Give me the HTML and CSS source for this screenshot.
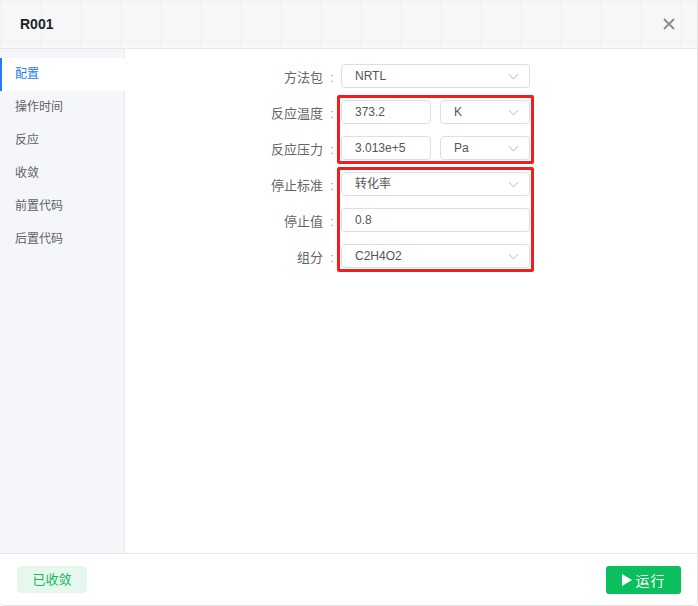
FILE: index.html
```html
<!doctype html>
<html lang="zh">
  <head>
    <meta charset="UTF-8" />
    <meta name="viewport" content="width=device-width, initial-scale=1.0" />
    <title>R001</title>
    <link rel="stylesheet" href="styles.css">
  </head>
  <body>
    <div class="dialog">
      <div class="dialog-header">
        <span class="dialog-title">R001</span>
        <svg class="close" width="12" height="12" viewBox="0 0 12 12">
          <path d="M1 1L11 11M11 1L1 11" stroke="#8a8a8a" stroke-width="1.8" fill="none" />
        </svg>
      </div>

      <div class="dialog-body">
        <ul class="side-menu">
          <li class="active">配置</li>
          <li>操作时间</li>
          <li>反应</li>
          <li>收敛</li>
          <li>前置代码</li>
          <li>后置代码</li>
        </ul>

        <div class="form">
          <div class="row">
            <label>方法包</label>
            <div class="select wide">NRTL<i class="arrow"></i></div>
          </div>

          <div class="group">
            <div class="row">
              <label>反应温度</label>
              <div class="input half">373.2</div>
              <div class="select half unit">K<i class="arrow"></i></div>
            </div>
            <div class="row">
              <label>反应压力</label>
              <div class="input half">3.013e+5</div>
              <div class="select half unit">Pa<i class="arrow"></i></div>
            </div>
          </div>

          <div class="group">
            <div class="row">
              <label>停止标准</label>
              <div class="select wide">转化率<i class="arrow"></i></div>
            </div>
            <div class="row">
              <label>停止值</label>
              <div class="input wide">0.8</div>
            </div>
            <div class="row">
              <label>组分</label>
              <div class="select wide">C2H4O2<i class="arrow"></i></div>
            </div>
          </div>
        </div>
      </div>

      <div class="dialog-footer">
        <span class="status">已收敛</span>
        <button class="run">
          <svg width="10" height="12" viewBox="0 0 10 12"><path d="M0 0L10 6L0 12Z" fill="#fff" /></svg>
          运行
        </button>
      </div>
    </div>
  </body>
</html>
```

FILE: styles.css
```css
*,
*::before,
*::after {
  box-sizing: border-box;
}

body {
  margin: 0;
  font-family: "Liberation Sans", "Noto Sans CJK SC", sans-serif;
  color: #606266;
  background: #fff;
}

.dialog {
  width: 698px;
  height: 606px;
  border: 1px solid #e3e3e3;
  border-top: none;
  border-left: none;
  border-radius: 0 0 5px 5px;
  display: flex;
  flex-direction: column;
  overflow: hidden;
}

.dialog-header {
  height: 49px;
  flex: none;
  display: flex;
  align-items: center;
  justify-content: space-between;
  padding: 0 22px 0 20px;
  border-bottom: 1px solid #e6e8eb;
  background-color: #f6f7f9;
  background-image:
    linear-gradient(rgba(228, 231, 236, 0.25) 1px, transparent 1px),
    linear-gradient(90deg, rgba(228, 231, 236, 0.25) 1px, transparent 1px);
  background-size: 40px 40px;
}

.dialog-title {
  font-size: 14px;
  font-weight: bold;
  color: #1f1f1f;
}

.dialog-body {
  flex: 1;
  display: flex;
  min-height: 0;
}

.side-menu {
  list-style: none;
  margin: 0;
  padding: 9px 0 0;
  width: 125px;
  flex: none;
  background: #f5f6fa;
  border-right: 1px solid #e8e9ed;
}

.side-menu li {
  height: 33px;
  line-height: 33px;
  padding-left: 15px;
  font-size: 12px;
  color: #606266;
}

.side-menu li.active {
  background: #fff;
  color: #2a7cf6;
  border-left: 2px solid #2a7cf6;
  padding-left: 13px;
  margin-right: -1px;
}

.form {
  padding: 15px 0 0 112px;
  display: flex;
  flex-direction: column;
  gap: 12px;
}

.group {
  position: relative;
  display: flex;
  flex-direction: column;
  gap: 12px;
}

/* red annotation frame over the controls */
.group::after {
  content: "";
  position: absolute;
  left: 100px;
  top: -5px;
  bottom: -4px;
  width: 197px;
  border: 3px solid #f51c1c;
  border-radius: 2px;
  pointer-events: none;
}

.row {
  display: flex;
  align-items: center;
  height: 24px;
}

.row label {
  width: 104px;
  text-align: right;
  font-size: 13px;
  color: #666;
}

.row label::after {
  content: ":";
  display: inline-block;
  width: 18px;
  text-align: center;
  color: #999;
}

.input,
.select {
  position: relative;
  height: 24px;
  line-height: 22px;
  border: 1px solid #dcdfe6;
  border-radius: 4px;
  padding-left: 13px;
  font-size: 12px;
  color: #555;
  background: #fff;
}

.wide {
  width: 189px;
}

.half {
  width: 90px;
}

.unit {
  margin-left: 9px;
}

.arrow {
  position: absolute;
  right: 12px;
  top: 6px;
  width: 7px;
  height: 7px;
  border-right: 1px solid #c8cbd2;
  border-bottom: 1px solid #c8cbd2;
  transform: rotate(45deg);
}

.dialog-footer {
  height: 52px;
  flex: none;
  display: flex;
  align-items: center;
  justify-content: space-between;
  padding: 0 16px 0 17px;
  border-top: 1px solid #e6e8eb;
}

.status {
  width: 70px;
  height: 27px;
  line-height: 27px;
  text-align: center;
  border-radius: 4px;
  background: #e6f7ee;
  color: #18b85e;
  font-size: 13px;
}

.run {
  width: 75px;
  height: 28px;
  border: none;
  border-radius: 3px;
  background: #0bbf5f;
  color: #fff;
  font-family: inherit;
  font-size: 14px;
  letter-spacing: 1px;
  display: flex;
  align-items: center;
  justify-content: center;
  gap: 4px;
  cursor: pointer;
}
```
